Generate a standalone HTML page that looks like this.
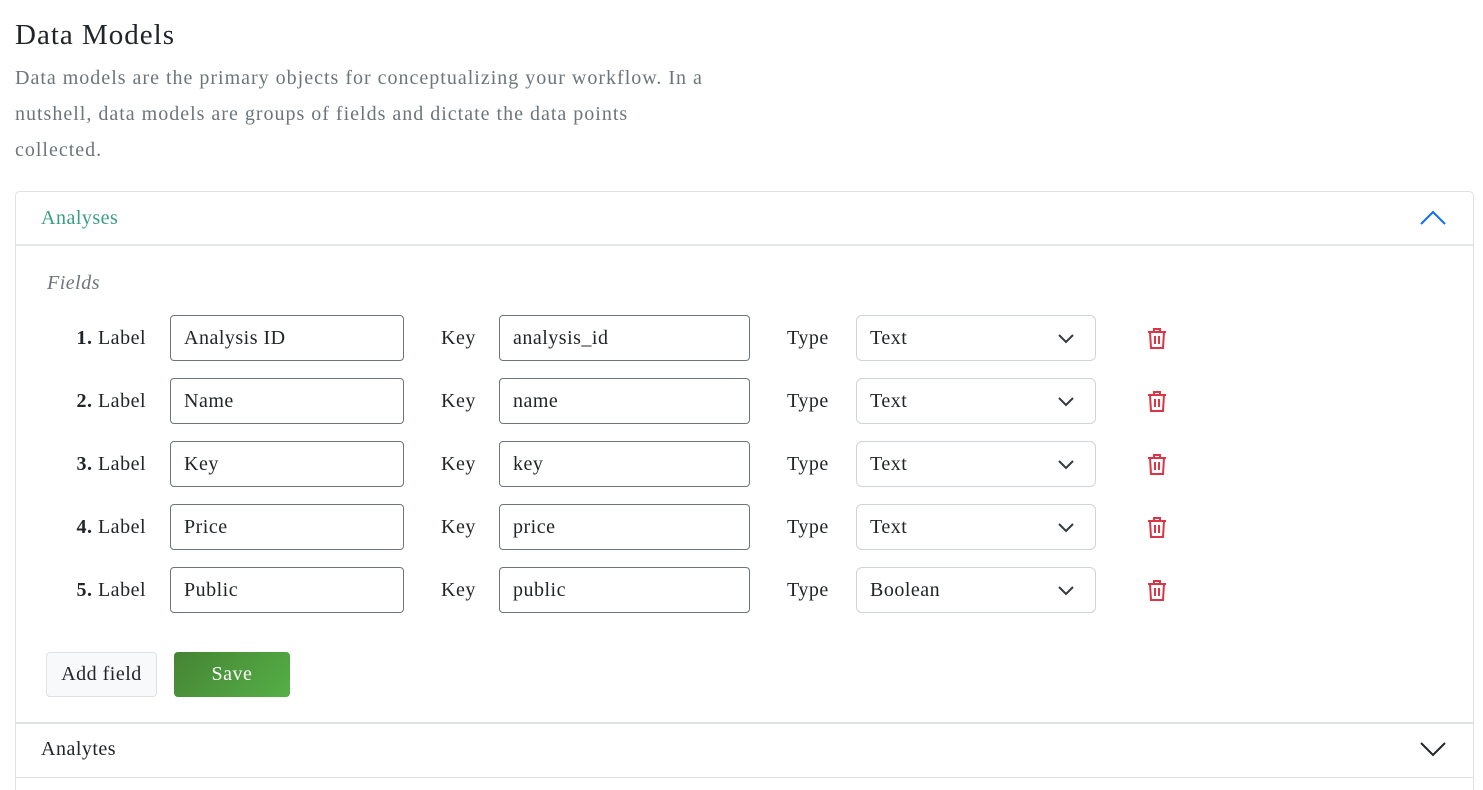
<!DOCTYPE html>
<html style="overflow:hidden"><head><style>
body{margin:0;width:1483px;height:790px;background:#fff;font-family:"Liberation Serif",serif;color:#212529;position:relative;overflow:hidden;letter-spacing:0.5px}
.a{position:absolute}
h1{position:absolute;left:15px;top:16px;margin:0;font-size:29px;font-weight:normal;line-height:38px;letter-spacing:1px}
.desc{left:15px;top:60px;width:760px;font-size:20px;line-height:36px;color:#6c757d;letter-spacing:1px;white-space:nowrap}
.card{left:15px;top:191px;width:1457px;height:640px;border:1px solid #dee2e6;border-radius:5px}
.inp{position:absolute;border:1px solid #6c757d;border-radius:4px;font-size:20px;line-height:44px;padding-left:13px;box-sizing:border-box;height:46px}
.sel{border-color:#ced4da}
.lbl{position:absolute;font-size:20px;line-height:46px}
</style></head><body>
<h1>Data Models</h1>
<div class="a desc">Data models are the primary objects for conceptualizing your workflow. In a<br>nutshell, data models are groups of fields and dictate the data points<br>collected.</div>
<div class="a card"></div>
<div class="a" style="left:41px;top:204px;font-size:20px;color:#3a9d83;line-height:28px">Analyses</div>
<svg class="a" style="left:1420px;top:209px" width="26" height="18"><path d="M1 15 L13 3 L25 15" fill="none" stroke="#0d6efd" stroke-width="2"/></svg>
<div class="a" style="left:16px;top:244px;width:1457px;height:2px;background:#e4e7ea"></div>
<div class="a" style="left:47px;top:272px;font-size:20px;font-style:italic;color:#6c757d">Fields</div>
<div id="rows"></div>
<script>
var d=[["Analysis ID","analysis_id","Text"],["Name","name","Text"],["Key","key","Text"],["Price","price","Text"],["Public","public","Boolean"]];
var h="";
d.forEach(function(r,i){var y=315+i*63;
h+='<div class="lbl" style="right:1337px;top:'+y+'px"><b>'+(i+1)+'.</b> Label</div>';
h+='<div class="inp" style="left:170px;top:'+y+'px;width:234px">'+r[0]+'</div>';
h+='<div class="lbl" style="left:441px;top:'+y+'px">Key</div>';
h+='<div class="inp" style="left:499px;top:'+y+'px;width:251px">'+r[1]+'</div>';
h+='<div class="lbl" style="left:787px;top:'+y+'px">Type</div>';
h+='<div class="inp sel" style="left:856px;top:'+y+'px;width:240px;border-radius:6px">'+r[2]+'<svg style="position:absolute;left:200px;top:17px" width="18" height="12"><path d="M2 2 L9 9 L16 2" fill="none" stroke="#343a40" stroke-width="2"/></svg></div>';
h+='<svg class="a" style="left:1146px;top:'+(y+12)+'px" width="22" height="24"><path d="M2 5 H20 M8 5 V2 H14 V5 M4 5 L5 21 H17 L18 5 M9 9 V17 M13 9 V17" fill="none" stroke="#dc3545" stroke-width="2"/></svg>';
});
document.getElementById("rows").innerHTML=h;
</script>
<div class="a" style="left:46px;top:652px;width:111px;height:45px;box-sizing:border-box;border:1px solid #dee2e6;border-radius:4px;background:#f8f9fa;font-size:20px;line-height:43px;text-align:center">Add field</div>
<div class="a" style="left:174px;top:652px;width:116px;height:45px;border-radius:4px;background:linear-gradient(135deg,#468334,#55b046);color:#fff;font-size:20px;line-height:45px;text-align:center">Save</div>
<div class="a" style="left:16px;top:722px;width:1457px;height:2px;background:#dee2e6"></div>
<div class="a" style="left:41px;top:735px;font-size:20px;line-height:28px">Analytes</div>
<svg class="a" style="left:1420px;top:740px" width="26" height="18"><path d="M1 3 L13 15 L25 3" fill="none" stroke="#212529" stroke-width="2"/></svg>
<div class="a" style="left:16px;top:777px;width:1457px;height:1px;background:#dee2e6"></div>
</body></html>
